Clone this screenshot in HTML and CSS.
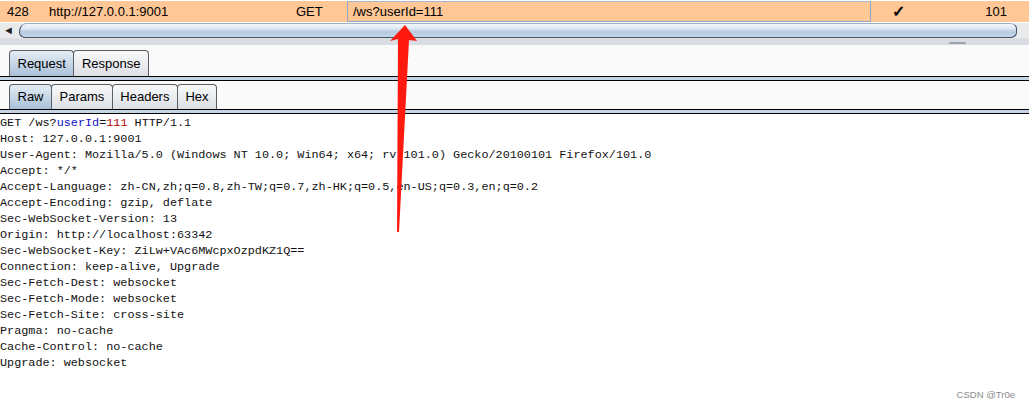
FILE: index.html
```html
<!DOCTYPE html>
<html lang="en">

<head>
    <meta charset="UTF-8">
    <title>Request viewer</title>
    <link rel="stylesheet" href="styles.css">
</head>

<body>

    <!-- Selected history row -->
    <div class="history-row">
        <span class="cell num">428</span>
        <span class="cell host">http://127.0.0.1:9001</span>
        <span class="cell method">GET</span>
        <span class="cell url">/ws?userId=111</span>
        <span class="cell check">&#10003;</span>
        <span class="cell status">101</span>
    </div>

    <!-- Horizontal scrollbar -->
    <div class="hscroll">
        <span class="scroll-btn">&#9668;</span>
        <div class="scroll-thumb"></div>
    </div>

    <div class="splitter"><span class="grip"></span></div>

    <!-- Request / Response tabs -->
    <div class="tabbar">
        <span class="tab active">Request</span>
        <span class="tab">Response</span>
    </div>
    <div class="tab-rule"></div>

    <div class="tabbar sub">
        <span class="tab active">Raw</span>
        <span class="tab">Params</span>
        <span class="tab">Headers</span>
        <span class="tab">Hex</span>
    </div>
    <div class="tab-rule"></div>

    <pre class="raw">GET /ws?<span class="pname">userId</span>=<span class="pval">111</span> HTTP/1.1
Host: 127.0.0.1:9001
User-Agent: Mozilla/5.0 (Windows NT 10.0; Win64; x64; rv:101.0) Gecko/20100101 Firefox/101.0
Accept: */*
Accept-Language: zh-CN,zh;q=0.8,zh-TW;q=0.7,zh-HK;q=0.5,en-US;q=0.3,en;q=0.2
Accept-Encoding: gzip, deflate
Sec-WebSocket-Version: 13
Origin: http://localhost:63342
Sec-WebSocket-Key: ZiLw+VAc6MWcpxOzpdKZ1Q==
Connection: keep-alive, Upgrade
Sec-Fetch-Dest: websocket
Sec-Fetch-Mode: websocket
Sec-Fetch-Site: cross-site
Pragma: no-cache
Cache-Control: no-cache
Upgrade: websocket</pre>

    <div class="watermark">CSDN @Tr0e</div>

    <!-- red annotation arrow -->
    <svg class="arrow" width="40" height="220" viewBox="0 0 40 220">
        <polygon points="24,0 36,16 28,15 18,207 16,207 17,14 9,16" fill="#ff1a10" />
    </svg>

</body>

</html>
```

FILE: styles.css
```css
* {
    margin: 0;
    padding: 0;
    box-sizing: border-box;
}

body {
    font-family: "Liberation Sans", Arial, sans-serif;
    font-size: 13px;
    color: #000;
    background-color: #fff;
    width: 1029px;
    height: 408px;
    position: relative;
    overflow: hidden;
}

.history-row {
    display: flex;
    align-items: center;
    height: 22px;
    margin-top: 1px;
    background-color: #ffc696;
    border-bottom: 1px solid #fff;
}

.cell {
    flex-shrink: 0;
    white-space: nowrap;
    line-height: 20px;
}

.num {
    width: 49px;
    padding-left: 7px;
}

.host {
    width: 247px;
}

.method {
    width: 51px;
}

.url {
    width: 524px;
    height: 21px;
    padding-left: 5px;
    border: 1px solid #8ea7c6;
    border-top-color: #a5b8d2;
}

.check {
    width: 50px;
    padding-left: 21px;
    font-size: 16px;
    font-weight: bold;
}

.status {
    width: 108px;
    text-align: right;
    padding-right: 22px;
}

.hscroll {
    display: flex;
    height: 16px;
    background-color: #e9eaec;
    border-bottom: 1px solid #e0e0e0;
}

.scroll-btn {
    width: 19px;
    font-size: 11px;
    line-height: 15px;
    padding-left: 3px;
    color: #222;
}

.scroll-thumb {
    width: 998px;
    border: 1px solid #42536a;
    border-top-color: #9fb0c4;
    border-radius: 10px / 8px;
    border-top-left-radius: 10px 14px;
    background: linear-gradient(#f2f6fa 0%, #dfe8f2 35%, #b6cadf 60%, #c5d6e8 100%);
}

.splitter {
    display: flex;
    justify-content: flex-end;
    height: 6px;
    background-color: #d9dce2;
    padding-right: 63px;
}

.grip {
    width: 17px;
    height: 2px;
    margin-top: 3px;
    background-color: #9ea4ad;
    border-radius: 1px;
}

.tabbar {
    display: flex;
    align-items: flex-end;
    height: 31px;
    padding-left: 9px;
    background-color: #fafafa;
}

.tabbar.sub {
    height: 28px;
}

.tab {
    padding: 0 7.5px;
    height: 26px;
    line-height: 25px;
    border: 1px solid #5a5f66;
    border-bottom: none;
    border-radius: 4px 4px 0 0;
    background: linear-gradient(#f9f9fa, #dcdfe4);
    margin-right: -1px;
}

.tabbar.sub .tab {
    height: 25px;
    line-height: 24px;
}

.tab.active {
    background: linear-gradient(#e5edf5, #a9c0d7);
}

.tab-rule {
    height: 5px;
    background-color: #c4d4e5;
    border-top: 1px solid #000;
    border-bottom: 1px solid #000;
}

.raw {
    font-family: "Liberation Mono", "Courier New", monospace;
    font-size: 11.8px;
    line-height: 16px;
    padding-top: 1px;
    color: #111;
}

.pname {
    color: #1010c8;
}

.pval {
    color: #b00000;
}

.watermark {
    position: absolute;
    right: 14px;
    bottom: 8px;
    font-size: 9.5px;
    color: #8a8a8a;
}

/* annotation overlay */
.arrow {
    position: absolute;
    left: 381px;
    top: 25px;
}
```
